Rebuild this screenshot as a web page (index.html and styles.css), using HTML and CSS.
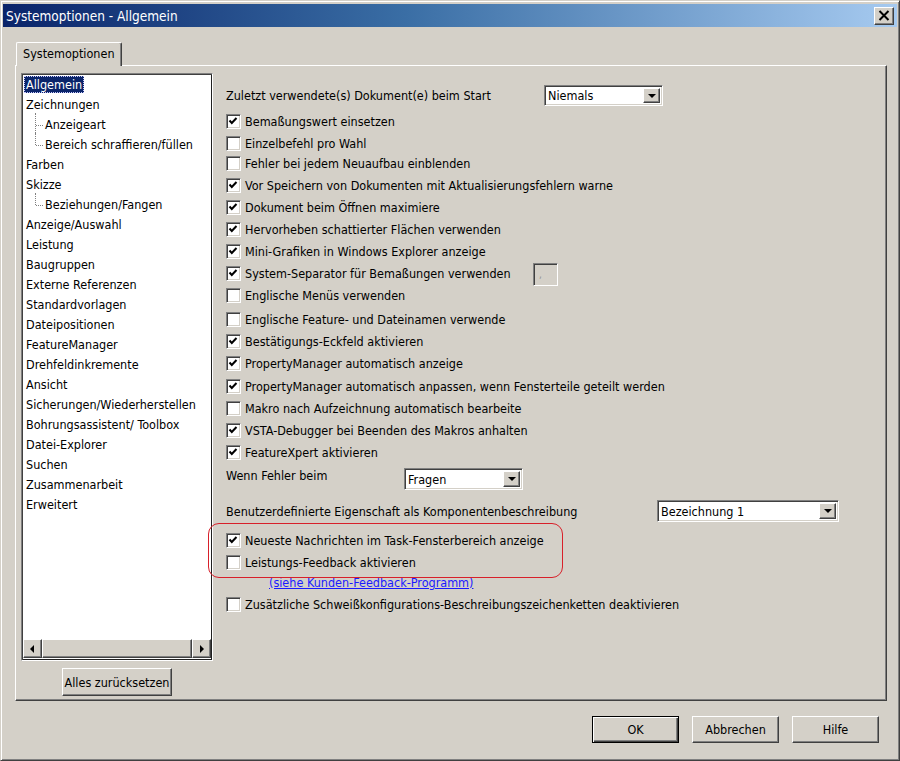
FILE: index.html
```html
<!DOCTYPE html>
<html lang="de">
<head>
<meta charset="utf-8">
<title>Systemoptionen - Allgemein</title>
<link rel="stylesheet" href="styles.css">
</head>
<body>
<div class="window">
  <div class="titlebar">
    <span class="title">Systemoptionen - Allgemein</span>
    <div class="close raised"><svg width="12" height="11" viewBox="0 0 12 11"><path d="M1.5 1 L10.5 10 M10.5 1 L1.5 10" stroke="#000" stroke-width="2"/></svg></div>
  </div>

  <div class="tabs"><div class="tab">Systemoptionen</div></div>

  <div class="panel">
    <div class="leftcol">
      <div class="tree">
        <ul class="tree-list">
          <li class="item"><span class="sel">Allgemein</span></li>
          <li class="item">Zeichnungen</li>
          <li class="item child">Anzeigeart</li>
          <li class="item child last">Bereich schraffieren/füllen</li>
          <li class="item">Farben</li>
          <li class="item">Skizze</li>
          <li class="item child last">Beziehungen/Fangen</li>
          <li class="item">Anzeige/Auswahl</li>
          <li class="item">Leistung</li>
          <li class="item">Baugruppen</li>
          <li class="item">Externe Referenzen</li>
          <li class="item">Standardvorlagen</li>
          <li class="item">Dateipositionen</li>
          <li class="item">FeatureManager</li>
          <li class="item">Drehfeldinkremente</li>
          <li class="item">Ansicht</li>
          <li class="item">Sicherungen/Wiederherstellen</li>
          <li class="item">Bohrungsassistent/ Toolbox</li>
          <li class="item">Datei-Explorer</li>
          <li class="item">Suchen</li>
          <li class="item">Zusammenarbeit</li>
          <li class="item">Erweitert</li>
        </ul>
        <div class="hscroll">
          <div class="sbtn raised"><svg width="5" height="8" viewBox="0 0 5 8"><path d="M4 0 L4 8 L0 4 Z" fill="#000"/></svg></div>
          <div class="thumb raised"></div>
          <div class="sbtn raised"><svg width="5" height="8" viewBox="0 0 5 8"><path d="M1 0 L1 8 L5 4 Z" fill="#000"/></svg></div>
        </div>
      </div>
      <div class="btn reset">Alles zurücksetzen</div>
    </div>

    <div class="rightcol">
      <div class="row first">
        <span class="lbl w-start">Zuletzt verwendete(s) Dokument(e) beim Start</span>
        <div class="combo c-niemals"><span class="combo-text">Niemals</span><div class="combo-btn raised"><svg width="8" height="4" viewBox="0 0 8 4"><path d="M0 0 H8 L4 4 Z" fill="#000"/></svg></div></div>
      </div>

      <div class="checks">
        <div class="cb-row"><span class="cb on"></span><span>Bemaßungswert einsetzen</span></div>
        <div class="cb-row"><span class="cb"></span><span>Einzelbefehl pro Wahl</span></div>
        <div class="cb-row up2"><span class="cb"></span><span>Fehler bei jedem Neuaufbau einblenden</span></div>
        <div class="cb-row"><span class="cb on"></span><span>Vor Speichern von Dokumenten mit Aktualisierungsfehlern warne</span></div>
        <div class="cb-row"><span class="cb on"></span><span>Dokument beim Öffnen maximiere</span></div>
        <div class="cb-row"><span class="cb on"></span><span>Hervorheben schattierter Flächen verwenden</span></div>
        <div class="cb-row"><span class="cb on"></span><span>Mini-Grafiken in Windows Explorer anzeige</span></div>
        <div class="cb-row"><span class="cb on"></span><span class="sep-lbl">System-Separator für Bemaßungen verwenden</span><span class="sepbox">,</span></div>
        <div class="cb-row"><span class="cb"></span><span>Englische Menüs verwenden</span></div>
        <div class="cb-row down2"><span class="cb"></span><span>Englische Feature- und Dateinamen verwende</span></div>
        <div class="cb-row"><span class="cb on"></span><span>Bestätigungs-Eckfeld aktivieren</span></div>
        <div class="cb-row"><span class="cb on"></span><span>PropertyManager automatisch anzeige</span></div>
        <div class="cb-row down1"><span class="cb on"></span><span>PropertyManager automatisch anpassen, wenn Fensterteile geteilt werden</span></div>
        <div class="cb-row"><span class="cb"></span><span>Makro nach Aufzeichnung automatisch bearbeite</span></div>
        <div class="cb-row"><span class="cb on"></span><span>VSTA-Debugger bei Beenden des Makros anhalten</span></div>
        <div class="cb-row"><span class="cb on"></span><span>FeatureXpert aktivieren</span></div>
      </div>

      <div class="row wenn">
        <span class="lbl w-wenn top">Wenn Fehler beim</span>
        <div class="combo c-fragen"><span class="combo-text">Fragen</span><div class="combo-btn raised"><svg width="8" height="4" viewBox="0 0 8 4"><path d="M0 0 H8 L4 4 Z" fill="#000"/></svg></div></div>
      </div>

      <div class="row bez">
        <span class="lbl w-bez">Benutzerdefinierte Eigenschaft als Komponentenbeschreibung</span>
        <div class="combo c-bez"><span class="combo-text">Bezeichnung 1</span><div class="combo-btn raised"><svg width="8" height="4" viewBox="0 0 8 4"><path d="M0 0 H8 L4 4 Z" fill="#000"/></svg></div></div>
      </div>

      <div class="feedback">
        <div class="cb-row"><span class="cb on"></span><span>Neueste Nachrichten im Task-Fensterbereich anzeige</span></div>
        <div class="cb-row"><span class="cb"></span><span>Leistungs-Feedback aktivieren</span></div>
        <div class="link-row"><span class="link">(siehe Kunden-Feedback-Programm)</span></div>
        <div class="mark"></div>
      </div>
      <div class="cb-row"><span class="cb"></span><span>Zusätzliche Schweißkonfigurations-Beschreibungszeichenketten deaktivieren</span></div>
    </div>
  </div>

  <div class="buttons">
    <div class="btn default">OK</div>
    <div class="btn">Abbrechen</div>
    <div class="btn">Hilfe</div>
  </div>
</div>
</body>
</html>
```

FILE: styles.css
```css
html, body {
  margin: 0;
  padding: 0;
}
body {
  width: 900px;
  height: 761px;
  overflow: hidden;
  background: #d4d0c8;
  font-family: "DejaVu Sans Condensed", "DejaVu Sans", sans-serif;
  font-size: 12.5px;
  color: #000;
}
.window {
  box-sizing: border-box;
  width: 900px;
  height: 761px;
  border: 1px solid;
  border-color: #d4d0c8 #404040 #404040 #d4d0c8;
  box-shadow: inset 1px 1px #fff, inset -1px -1px #808080;
  padding: 2px;
  display: flex;
  flex-direction: column;
}
.raised {
  box-sizing: border-box;
  background: #d4d0c8;
  border: 1px solid;
  border-color: #fff #404040 #404040 #fff;
  box-shadow: inset -1px -1px #808080;
}
.titlebar {
  margin-top: 1px;
  height: 23px;
  background: linear-gradient(to right, #0a246a 0%, #3a6ea5 45%, #a6caf0 100%);
  display: flex;
  align-items: center;
  justify-content: space-between;
  padding: 0 3px 0 3px;
}
.title {
  color: #fff;
  font-size: 13.5px;
  padding-left: 0;
}
.close {
  width: 20px;
  height: 18px;
  display: flex;
  align-items: center;
  justify-content: center;
}
.tabs {
  margin-top: 15px;
  padding-left: 13px;
  height: 23px;
  display: flex;
  position: relative;
  z-index: 2;
}
.tab {
  box-sizing: border-box;
  width: 106px;
  height: 24px;
  background: #d4d0c8;
  border-top: 1px solid #fff;
  border-left: 1px solid #fff;
  border-right: 1px solid #404040;
  box-shadow: inset -1px 0 #808080;
  border-radius: 2px 2px 0 0;
  padding-left: 6px;
  line-height: 22px;
}
.panel {
  box-sizing: border-box;
  margin-left: 12px;
  width: 872px;
  height: 636px;
  border-top: 1px solid #fff;
  border-left: 1px solid #fff;
  border-right: 1px solid #404040;
  border-bottom: 1px solid #404040;
  box-shadow: inset -1px -1px #808080;
  display: flex;
  padding: 7px 0 0 5px;
}
.leftcol {
  width: 192px;
  display: flex;
  flex-direction: column;
  align-items: center;
}
.tree {
  box-sizing: border-box;
  width: 192px;
  height: 588px;
  background: #fff;
  border: 1px solid;
  border-color: #808080 #fff #fff #808080;
  box-shadow: inset 1px 1px #404040, inset -1px -1px #202020;
  padding: 1px;
  display: flex;
  flex-direction: column;
}
.tree-list {
  list-style: none;
  margin: 0;
  padding: 0;
  flex: 1;
}
.item {
  position: relative;
  height: 20px;
  line-height: 20px;
  padding-left: 3px;
  white-space: nowrap;
}
.item.child {
  padding-left: 22px;
}
.item.child::before {
  content: "";
  position: absolute;
  left: 12px;
  top: -2px;
  height: 22px;
  border-left: 1px dotted #808080;
}
.item.child.last::before {
  height: 12px;
}
.item.child::after {
  content: "";
  position: absolute;
  left: 13px;
  top: 10px;
  width: 7px;
  border-top: 1px dotted #808080;
}
.sel {
  background: #0a246a;
  color: #fff;
  padding: 1px 2px;
  margin-left: -2px;
  outline: 1px dotted #c8c8ff;
  outline-offset: -1px;
}
.hscroll {
  height: 19px;
  display: flex;
  margin-bottom: 1px;
}
.sbtn {
  width: 19px;
  height: 19px;
  display: flex;
  align-items: center;
  justify-content: center;
}
.thumb {
  flex: 1;
  height: 19px;
}
.btn {
  box-sizing: border-box;
  background: #d4d0c8;
  border: 1px solid;
  border-color: #fff #404040 #404040 #fff;
  box-shadow: inset -1px -1px #808080;
  display: flex;
  align-items: center;
  justify-content: center;
  width: 87px;
  height: 27px;
}
.btn.default {
  border: 1px solid #000;
  box-shadow: inset 1px 1px #fff, inset -1px -1px #404040, inset -2px -2px #808080;
}
.reset {
  margin-top: 7px;
  width: 110px;
  height: 28px;
}
.rightcol {
  margin-left: 13px;
  padding-top: 12px;
  display: flex;
  flex-direction: column;
}
.row {
  display: flex;
  align-items: center;
  white-space: nowrap;
}
.row.first { height: 21px; }
.lbl { display: block; }
.lbl.top { align-self: flex-start; line-height: 16px; }
.w-start { width: 318px; }
.w-wenn { width: 178px; }
.w-bez { width: 431px; }
.combo {
  box-sizing: border-box;
  height: 21px;
  background: #fff;
  border: 1px solid;
  border-color: #808080 #fff #fff #808080;
  box-shadow: inset 1px 1px #404040, inset -1px -1px #d4d0c8;
  display: flex;
  align-items: center;
  padding: 2px;
}
.combo-text {
  flex: 1;
  padding-left: 1px;
}
.combo-btn {
  width: 17px;
  height: 100%;
  display: flex;
  align-items: center;
  justify-content: center;
}
.c-niemals { width: 119px; }
.c-fragen { width: 119px; height: 22px; }
.c-bez { width: 182px; height: 22px; }
.checks {
  margin-top: 4px;
  display: flex;
  flex-direction: column;
}
.cb-row {
  display: flex;
  align-items: center;
  height: 22px;
  white-space: nowrap;
}
.cb-row.up2 { margin-top: -2px; }
.cb-row.down2 { margin-top: 2px; }
.cb-row.down1 { margin-top: 1px; }
.cb {
  box-sizing: border-box;
  flex: none;
  width: 15px;
  height: 15px;
  margin-right: 4px;
  background: #fff;
  border: 1px solid;
  border-color: #808080 #fff #fff #808080;
  box-shadow: inset 1px 1px #404040, inset -1px -1px #d4d0c8;
}
.cb.on {
  background: #fff url("data:image/svg+xml;utf8,<svg xmlns='http://www.w3.org/2000/svg' width='13' height='13' viewBox='0 0 13 13'><polyline points='2.5,5.5 4.8,8 9.5,3' fill='none' stroke='black' stroke-width='2'/></svg>") no-repeat center;
}
.sep-lbl { width: 288px; }
.sepbox {
  box-sizing: border-box;
  width: 25px;
  height: 23px;
  margin-top: 3px;
  border: 1px solid;
  border-color: #808080 #fff #fff #808080;
  box-shadow: inset 1px 1px #404040, inset -1px -1px #d4d0c8;
  color: #909090;
  font-size: 10px;
  padding: 5px 0 0 5px;
  line-height: 12px;
}
.wenn {
  margin-top: 5px;
  height: 22px;
}
.bez {
  margin-top: 10px;
  height: 22px;
}
.feedback {
  position: relative;
  margin-top: 7px;
  display: flex;
  flex-direction: column;
}
.link-row {
  height: 20px;
  line-height: 20px;
  padding-left: 43px;
}
.link {
  color: #1a1aff;
  text-decoration: underline;
}
.mark {
  position: absolute;
  left: -18px;
  top: -6px;
  width: 355px;
  height: 55px;
  box-sizing: border-box;
  border: 1px solid #d8202a;
  border-radius: 11px;
  pointer-events: none;
}
.buttons {
  margin-top: 15px;
  display: flex;
  justify-content: flex-end;
  gap: 13px;
  padding-right: 18px;
}
```
